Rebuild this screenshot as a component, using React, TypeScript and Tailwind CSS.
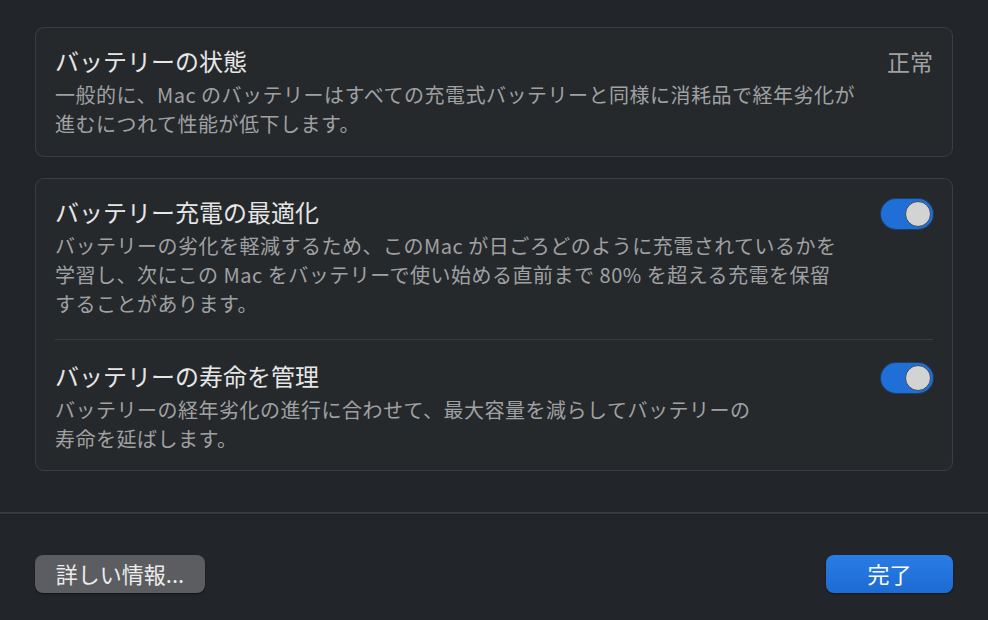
import React from 'react';

const font = { fontFamily: '"Noto Sans CJK JP", "Noto Sans", sans-serif' };

function Toggle() {
  return (
    <div className="flex h-[30px] w-[52px] shrink-0 items-center justify-end rounded-full bg-[#1f6fd6] pr-[2px] shadow-[0_0_0_1px_#1a3f6e]">
      <div className="h-[26px] w-[26px] rounded-full border border-[#3a4a5c] bg-[#d3d3d3]" />
    </div>
  );
}

function Lines({ lines }: { lines: string[] }) {
  return (
    <div className="mt-[3px] text-[20px] leading-[29px] tracking-[0.5px] text-[#a0a1a3]">
      {lines.map((l) => (
        <div key={l} className="whitespace-nowrap">{l}</div>
      ))}
    </div>
  );
}

export default function App() {
  return (
    <div style={font} className="flex h-[620px] w-[988px] flex-col bg-[#22262a] text-[#e6e6e6]">
      <div className="flex flex-col gap-[21px] px-[35px] pt-[27px]">
        {/* status card */}
        <div className="flex items-start justify-between rounded-[9px] border border-[#3b3f43] bg-[#25292c] pb-[18px] pl-[19px] pr-[19px] pt-[17px]">
          <div>
            <div className="text-[24px] leading-[32px]">バッテリーの状態</div>
            <Lines
              lines={[
                '一般的に、Mac のバッテリーはすべての充電式バッテリーと同様に消耗品で経年劣化が',
                '進むにつれて性能が低下します。',
              ]}
            />
          </div>
          <div className="text-[23px] leading-[32px] text-[#a0a1a3]">正常</div>
        </div>

        {/* settings card */}
        <div className="rounded-[9px] border border-[#3b3f43] bg-[#25292c] px-[19px]">
          <div className="flex items-start justify-between pb-[21px] pt-[17px]">
            <div>
              <div className="text-[24px] leading-[32px]">バッテリー充電の最適化</div>
              <Lines
                lines={[
                  'バッテリーの劣化を軽減するため、このMac が日ごろどのように充電されているかを',
                  '学習し、次にこの Mac をバッテリーで使い始める直前まで 80% を超える充電を保留',
                  'することがあります。',
                ]}
              />
            </div>
            <div className="pt-[3px]">
              <Toggle />
            </div>
          </div>
          <div className="h-px bg-[#383c40]" />
          <div className="flex items-start justify-between pb-[17px] pt-[20px]">
            <div>
              <div className="text-[24px] leading-[32px]">バッテリーの寿命を管理</div>
              <Lines
                lines={[
                  'バッテリーの経年劣化の進行に合わせて、最大容量を減らしてバッテリーの',
                  '寿命を延ばします。',
                ]}
              />
            </div>
            <div className="pt-[3px]">
              <Toggle />
            </div>
          </div>
        </div>
      </div>

      <div className="mt-auto border-t-2 border-[#373b3e] border-b border-b-[#1c1f22]" />
      <div className="flex h-[105px] items-center justify-between px-[35px] pt-[12px]">
        <button className="flex h-[38px] w-[170px] items-center justify-center rounded-[8px] bg-[#5b5d60] text-[22px] text-[#ececec] shadow-[0_1px_2px_rgba(0,0,0,0.5)]">
          詳しい情報...
        </button>
        <button className="flex h-[38px] w-[127px] items-center justify-center rounded-[8px] bg-gradient-to-b from-[#2a7de6] to-[#1d6bd3] text-[22px] text-white shadow-[0_1px_2px_rgba(0,0,0,0.5)]">
          完了
        </button>
      </div>
    </div>
  );
}
